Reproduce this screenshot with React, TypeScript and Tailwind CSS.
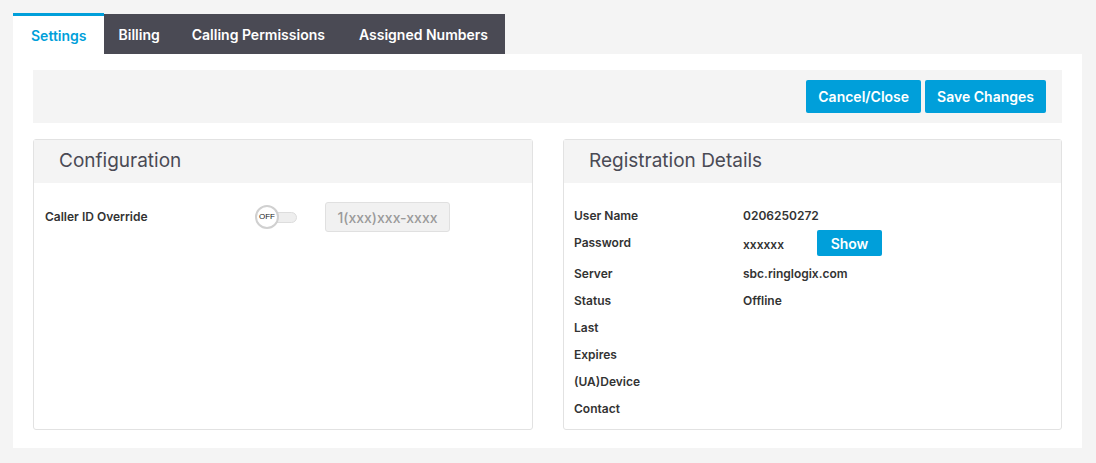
import React from "react";

const blue = "bg-[#009fda]";

function Toggle() {
  return (
    <div className="relative w-[42px] h-[24px] flex items-center">
      <div className="absolute left-[8px] right-0 h-[11px] rounded-full bg-[#eeeeee] border border-[#dddddd]" />
      <div className="relative w-[24px] h-[24px] rounded-full bg-white border-2 border-[#d0d0d0] flex items-center justify-center text-[8px] font-medium text-[#222] font-['Liberation_Sans',sans-serif]">
        OFF
      </div>
    </div>
  );
}

const rows: { label: string; value?: string; show?: boolean }[] = [
  { label: "User Name", value: "0206250272" },
  { label: "Password", value: "xxxxxx", show: true },
  { label: "Server", value: "sbc.ringlogix.com" },
  { label: "Status", value: "Offline" },
  { label: "Last" },
  { label: "Expires" },
  { label: "(UA)Device" },
  { label: "Contact" },
];

export default function App() {
  return (
    <div className="min-h-screen bg-[#f4f4f4] pt-[13px] pl-[13px] pr-[14px] pb-[15px] font-['Inter',sans-serif] text-[#333]">
      {/* tabs */}
      <div className="flex h-[41px]">
        <div className="bg-white border-t-[3px] border-[#009fda] pl-[18px] pr-[17px] flex items-center text-[14px] font-semibold text-[#009fda]">
          Settings
        </div>
        <div className="flex bg-[#4a4a54] mt-[1px] text-white text-[14px] font-semibold">
          <div className="px-[15px] flex items-center">Billing</div>
          <div className="px-[17px] flex items-center">Calling Permissions</div>
          <div className="px-[17px] flex items-center">Assigned Numbers</div>
        </div>
      </div>

      <div className="bg-white px-[20px] pt-[16px] pb-[18px]">
        {/* toolbar */}
        <div className="bg-[#f4f4f4] h-[53px] flex justify-end items-start pt-[10px] pr-[16px] gap-[4px]">
          <button className={`${blue} text-white text-[14px] font-semibold h-[33px] px-[12px] rounded-[2px]`}>
            Cancel/Close
          </button>
          <button className={`${blue} text-white text-[14px] font-semibold h-[33px] px-[12px] rounded-[2px]`}>
            Save Changes
          </button>
        </div>

        <div className="grid grid-cols-[500px_499px] gap-[30px] mt-[16px]">
          {/* configuration */}
          <div className="border border-[#e2e2e2] rounded-[3px] h-[291px]">
            <div className="bg-[#f4f4f4] h-[43px] flex items-center pl-[25px] text-[19px] text-[#4a4a54]">
              Configuration
            </div>
            <div className="pt-[19px] pl-[11px] flex items-center">
              <div className="w-[210px] text-[12px] font-semibold">Caller ID Override</div>
              <Toggle />
              <div className="ml-[28px] w-[125px] h-[30px] rounded-[3px] bg-[#f1f1f1] border border-[#e0e0e0] flex items-center justify-center text-[14px] font-medium text-[#9a9a9a]">
                1(xxx)xxx-xxxx
              </div>
            </div>
          </div>

          {/* registration */}
          <div className="border border-[#e2e2e2] rounded-[3px] h-[291px]">
            <div className="bg-[#f4f4f4] h-[43px] flex items-center pl-[25px] text-[19px] text-[#4a4a54]">
              Registration Details
            </div>
            <div className="pt-[19px] pl-[10px]">
              {rows.map((r) => (
                <div key={r.label} className={`flex items-center ${r.show ? "h-[31px]" : "h-[27px]"}`}>
                  <div className={`w-[169px] text-[12px] font-semibold ${r.show ? "-mt-[4px]" : ""}`}>{r.label}</div>
                  {r.value && (
                    <div className={`text-[12px] font-semibold ${r.show ? "w-[74px] font-medium text-[11px]" : ""}`}>
                      {r.value}
                    </div>
                  )}
                  {r.show && (
                    <button className={`${blue} text-white text-[14px] font-semibold h-[26px] w-[65px] rounded-[2px] -mt-[3px]`}>
                      Show
                    </button>
                  )}
                </div>
              ))}
            </div>
          </div>
        </div>
      </div>
    </div>
  );
}
